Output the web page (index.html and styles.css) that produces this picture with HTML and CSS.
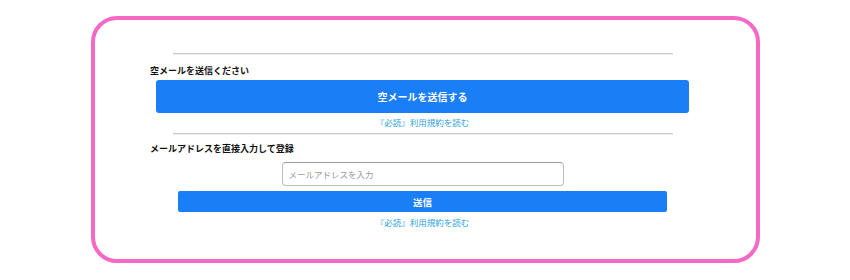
FILE: index.html
```html
<!DOCTYPE html>
<html lang="ja">
<head>
  <meta charset="UTF-8">
  <title>空メール登録</title>
  <link rel="stylesheet" href="styles.css">
</head>
<body>
  <div class="card">
    <div class="inner">
      <hr class="rule">
      <p class="label">空メールを送信ください</p>
      <a class="btn-big" href="#">空メールを送信する</a>
      <p class="terms"><a href="#">『必読』利用規約を読む</a></p>

      <hr class="rule rule-second">
      <p class="label label-second">メールアドレスを直接入力して登録</p>
      <form class="mail-form">
        <input class="mail-input" type="text" placeholder="メールアドレスを入力">
        <button class="btn-send" type="button">送信</button>
      </form>
      <p class="terms terms-last"><a href="#">『必読』利用規約を読む</a></p>
    </div>
  </div>
</body>
</html>
```

FILE: styles.css
```css
body {
  margin: 0;
  padding: 0;
  background-color: #fff;
  color: #222;
  font-family: "Noto Sans CJK JP", "Noto Sans", sans-serif;
}

.card {
  box-sizing: border-box;
  width: 669px;
  height: 247px;
  margin: 16px 0 0 91px;
  padding-top: 33px;
  border: 4px solid #f468c6;
  border-radius: 26px;
}

.inner {
  width: 545px;
  margin-left: 55px;
}

.rule {
  width: 500px;
  height: 0;
  margin: 0 auto;
  border: none;
  border-top: 1px solid #cbcbcb;
  border-bottom: 1px solid #ececec;
}

.label {
  margin: 10px 0 0 0;
  font-size: 9px;
  line-height: 12px;
  font-weight: bold;
  color: #111;
}

.btn-big {
  display: flex;
  align-items: center;
  justify-content: center;
  width: 533px;
  height: 33px;
  margin: 3px auto 0 auto;
  background-color: #1a7ef6;
  border-radius: 3px;
  color: #fff;
  font-size: 10px;
  font-weight: bold;
  text-decoration: none;
}

.terms {
  margin: 3px 0 0 0;
  text-align: center;
  font-size: 8.5px;
  line-height: 12px;
}

.terms a {
  color: #2b9fe0;
  text-decoration: none;
}

.rule-second {
  margin-top: 5px;
}

.label-second {
  margin-top: 8px;
}

.mail-form {
  display: flex;
  flex-direction: column;
  align-items: center;
  margin-top: 7px;
}

.mail-input {
  box-sizing: border-box;
  width: 282px;
  height: 24px;
  padding: 0 6px;
  border: 1px solid #bdbdbd;
  border-top-color: #999;
  border-radius: 4px;
  font-family: inherit;
  font-size: 8.5px;
  color: #333;
}

.mail-input::placeholder {
  color: #9a9a9a;
}

.btn-send {
  width: 489px;
  height: 21px;
  margin-top: 5px;
  padding: 0;
  border: none;
  border-radius: 2px;
  background-color: #1a7ef6;
  color: #fff;
  font-family: inherit;
  font-size: 9.5px;
  font-weight: bold;
}

.terms-last {
  margin-top: 4px;
}
```
